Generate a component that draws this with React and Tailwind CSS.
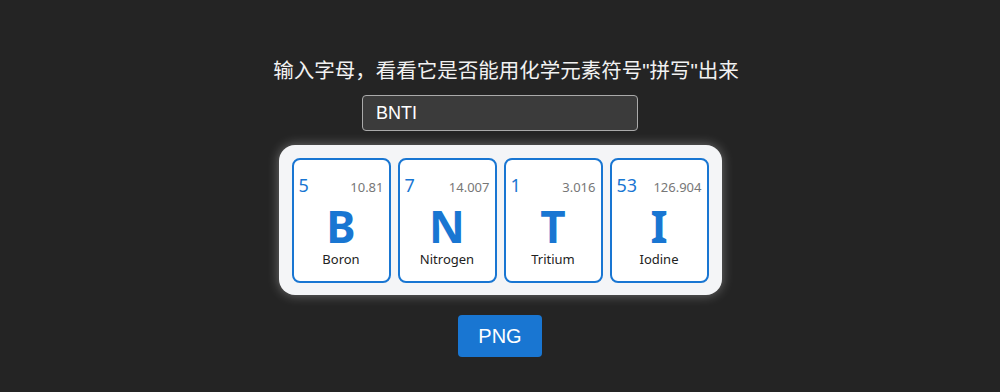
import { useState } from 'react';

const ELEMENTS = [
  { number: 5, mass: '10.81', symbol: 'B', name: 'Boron' },
  { number: 7, mass: '14.007', symbol: 'N', name: 'Nitrogen' },
  { number: 1, mass: '3.016', symbol: 'T', name: 'Tritium' },
  { number: 53, mass: '126.904', symbol: 'I', name: 'Iodine' },
];

function Tile({ el }) {
  return (
    <div className="w-[99px] h-[125px] rounded-[8px] border-2 border-[#1976d2] bg-white flex flex-col px-[5px]">
      <div className="flex items-baseline justify-between mt-[16px]">
        <span className="text-[18px] leading-none text-[#1976d2]">{el.number}</span>
        <span className="text-[13px] leading-none text-[#777]">{el.mass}</span>
      </div>
      <div className="text-center text-[44px] font-bold leading-none text-[#1976d2] mt-[10px]">
        {el.symbol}
      </div>
      <div className="text-center text-[13px] leading-none text-[#222] mt-[5px]">{el.name}</div>
    </div>
  );
}

export default function App() {
  const [text, setText] = useState('BNTI');

  return (
    <div className="min-h-[392px] bg-[#242424] flex flex-col items-center pt-[56px] font-['Liberation_Sans',sans-serif]">
      <h1 className="text-[20.5px] leading-[30px] text-[#f2f2f2] translate-x-[6px] font-['Liberation_Sans','Noto_Sans_CJK_SC',sans-serif]">
        输入字母，看看它是否能用化学元素符号"拼写"出来
      </h1>

      <input
        value={text}
        onChange={(e) => setText(e.target.value)}
        className="mt-[9px] w-[276px] h-9 rounded-[4px] border border-[#aaa] bg-[#3b3b3b] px-[13px] text-[18px] text-white outline-none"
      />

      {/* element tiles */}
      <div className="mt-[14px] rounded-[16px] bg-[#f4f5f7] pt-[13px] pb-[12px] px-[13px] flex gap-[7px] shadow-[0_0_12px_rgba(255,255,255,0.35)] font-['Noto_Sans',sans-serif]">
        {ELEMENTS.map((el) => (
          <Tile key={el.symbol} el={el} />
        ))}
      </div>

      <button className="mt-5 w-[84px] h-[42px] rounded-[4px] bg-[#1976d2] text-white text-[20px]">
        PNG
      </button>
    </div>
  );
}
